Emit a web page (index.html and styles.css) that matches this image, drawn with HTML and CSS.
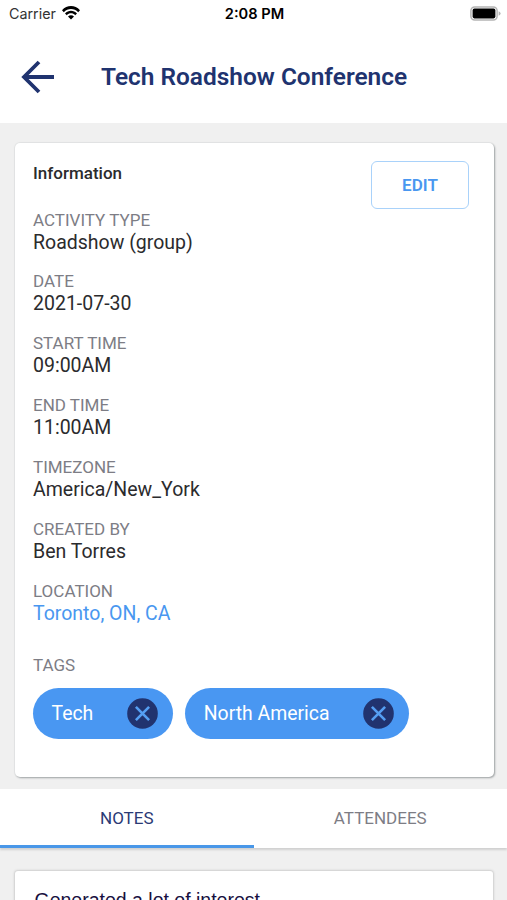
FILE: index.html
```html
<!DOCTYPE html>
<html lang="en">
<head>
<meta charset="utf-8">
<title>Tech Roadshow Conference</title>
<link rel="stylesheet" href="styles.css">
</head>
<body>
<div class="status">
  <div class="carrier"><span>Carrier</span>
    <svg class="wifi" width="18" height="14" viewBox="0 0 18 14"><path d="M0 4.3C5-1.3 13-1.3 18 4.3L16.2 6.2C12.2 1.8 5.8 1.8 1.8 6.2ZM3 7.4C6.4 3.7 11.6 3.7 15 7.4L13.2 9.3C10.8 6.7 7.2 6.7 4.8 9.3ZM6 10.5C7.8 8.7 10.2 8.7 12 10.5L9 13.6Z"/></svg>
  </div>
  <div class="clock">2:08 PM</div>
  <div class="power">
    <svg width="31" height="15" viewBox="0 0 31 15"><rect x=".9" y=".9" width="26.2" height="13.2" rx="3.8" fill="#fff" stroke="#b4b4b4" stroke-width="1.5"/><rect x="2.6" y="2.6" width="22.8" height="9.8" rx="1.8"/><path d="M28.6 5.2Q30.6 6 30.6 7.5T28.6 9.8Z" fill="#b4b4b4"/></svg>
  </div>
</div>
<header class="header">
  <svg class="back" width="34" height="34" viewBox="0 0 34 34"><path d="M33 17H3M18 2L3 17L18 32"/></svg>
  <h1 class="title">Tech Roadshow Conference</h1>
</header>
<main class="content">
  <section class="card">
    <div class="card-head"><h2>Information</h2><button class="edit">EDIT</button></div>
    <dl class="fields">
      <div class="field"><dt>ACTIVITY TYPE</dt><dd>Roadshow (group)</dd></div>
      <div class="field"><dt>DATE</dt><dd>2021-07-30</dd></div>
      <div class="field"><dt>START TIME</dt><dd>09:00AM</dd></div>
      <div class="field"><dt>END TIME</dt><dd>11:00AM</dd></div>
      <div class="field"><dt>TIMEZONE</dt><dd>America/New_York</dd></div>
      <div class="field"><dt>CREATED BY</dt><dd>Ben Torres</dd></div>
      <div class="field"><dt>LOCATION</dt><dd class="link">Toronto, ON, CA</dd></div>
    </dl>
    <div class="tags-label">TAGS</div>
    <div class="tags">
      <div class="tag"><span>Tech</span><svg width="31" height="31" viewBox="0 0 31 31"><circle cx="15.5" cy="15.5" r="15.3"/><path d="M8.9 8.9L22.1 22.1M22.1 8.9L8.9 22.1"/></svg></div>
      <div class="tag"><span>North America</span><svg width="31" height="31" viewBox="0 0 31 31"><circle cx="15.5" cy="15.5" r="15.3"/><path d="M8.9 8.9L22.1 22.1M22.1 8.9L8.9 22.1"/></svg></div>
    </div>
  </section>
</main>
<nav class="tabs">
  <div class="tab active">NOTES</div>
  <div class="tab">ATTENDEES</div>
</nav>
<section class="note">Generated a lot of interest.</section>
</body>
</html>
```

FILE: styles.css
```css
* { box-sizing: border-box; }
body {
  margin: 0;
  height: 900px;
  overflow: hidden;
  background: #f0f0f0;
  font-family: Roboto, sans-serif;
  color: #2b2b2d;
}
h1, h2, dl, dd { margin: 0; }
svg { display: block; flex: none; }

.status {
  height: 28px;
  display: grid;
  grid-template-columns: 1fr auto 1fr;
  align-items: center;
  padding: 0 6px 0 9px;
  background: #fff;
  font-family: Inter, sans-serif;
  color: #000;
}
.carrier { display: flex; align-items: center; gap: 6px; margin-top: -1px; color: #333; font-size: 14.3px; }
.wifi { fill: #000; margin-top: -1px; }
.clock { margin: -1px 1px 0 0; font-weight: 600; font-size: 14.6px; }
.power { display: flex; justify-content: flex-end; margin-top: -2px; }

.header {
  height: 95px;
  display: flex;
  align-items: center;
  padding: 3px 0 0 21px;
  background: #fff;
}
.back { fill: none; stroke: #20336f; stroke-width: 3.8; }
.title {
  margin-left: 46px;
  padding-bottom: 1px;
  font-size: 24.45px;
  font-weight: 600;
  line-height: 30px;
  color: #20336f;
  white-space: nowrap;
}

.content { padding: 20px 13px 12px 15px; }
.card {
  height: 634px;
  padding: 18px 25px 0 18px;
  border-radius: 5px;
  background: #fff;
  box-shadow: 1px 1px 2px 0 #9fa3a5, 0 0 1px 1px #e4e5e5;
}
.card-head { display: flex; justify-content: space-between; align-items: flex-start; height: 47.5px; }
.card-head h2 { font-size: 17px; font-weight: 500; line-height: 24px; }
.edit {
  width: 98px;
  height: 48px;
  border: 1px solid #a9d2fa;
  border-radius: 6px;
  background: #fff;
  color: #4997f0;
  font: 600 17px Roboto, sans-serif;
}
.field { height: 61.85px; }
.field dt, .tags-label { font-size: 17px; line-height: 22px; color: #7d7d85; }
.field dd { font-size: 19.5px; line-height: 23px; }
.field .link { color: #4997f0; }
.tags-label { margin-top: 12.5px; }
.tags { display: flex; gap: 12px; margin-top: 12px; }
.tag {
  display: flex;
  align-items: center;
  gap: 34px;
  height: 51px;
  padding: 0 15px 0 18.5px;
  border-radius: 26px;
  background: #4997f2;
  color: #fff;
  font-size: 19.4px;
}
.tag circle { fill: #21336f; }
.tag path { stroke: #559ff3; stroke-width: 2.6; }

.tabs { display: flex; height: 59px; background: #fff; box-shadow: 0 2px 2px #d0d0d0; }
.tab { flex: 1; padding-top: 17px; text-align: center; font-size: 17px; line-height: 25px; color: #7d7d85; }
.active { color: #2b3a75; border-bottom: 3px solid #4997e8; }

.note {
  height: 60px;
  margin: 23px 14px 0 15px;
  padding: 17px 19.5px;
  border-radius: 3px;
  background: #fff;
  box-shadow: 0 0 2px 1px #cfcfcf;
  color: #170f40;
  font: 19.5px/24px "Liberation Sans", sans-serif;
}
```
